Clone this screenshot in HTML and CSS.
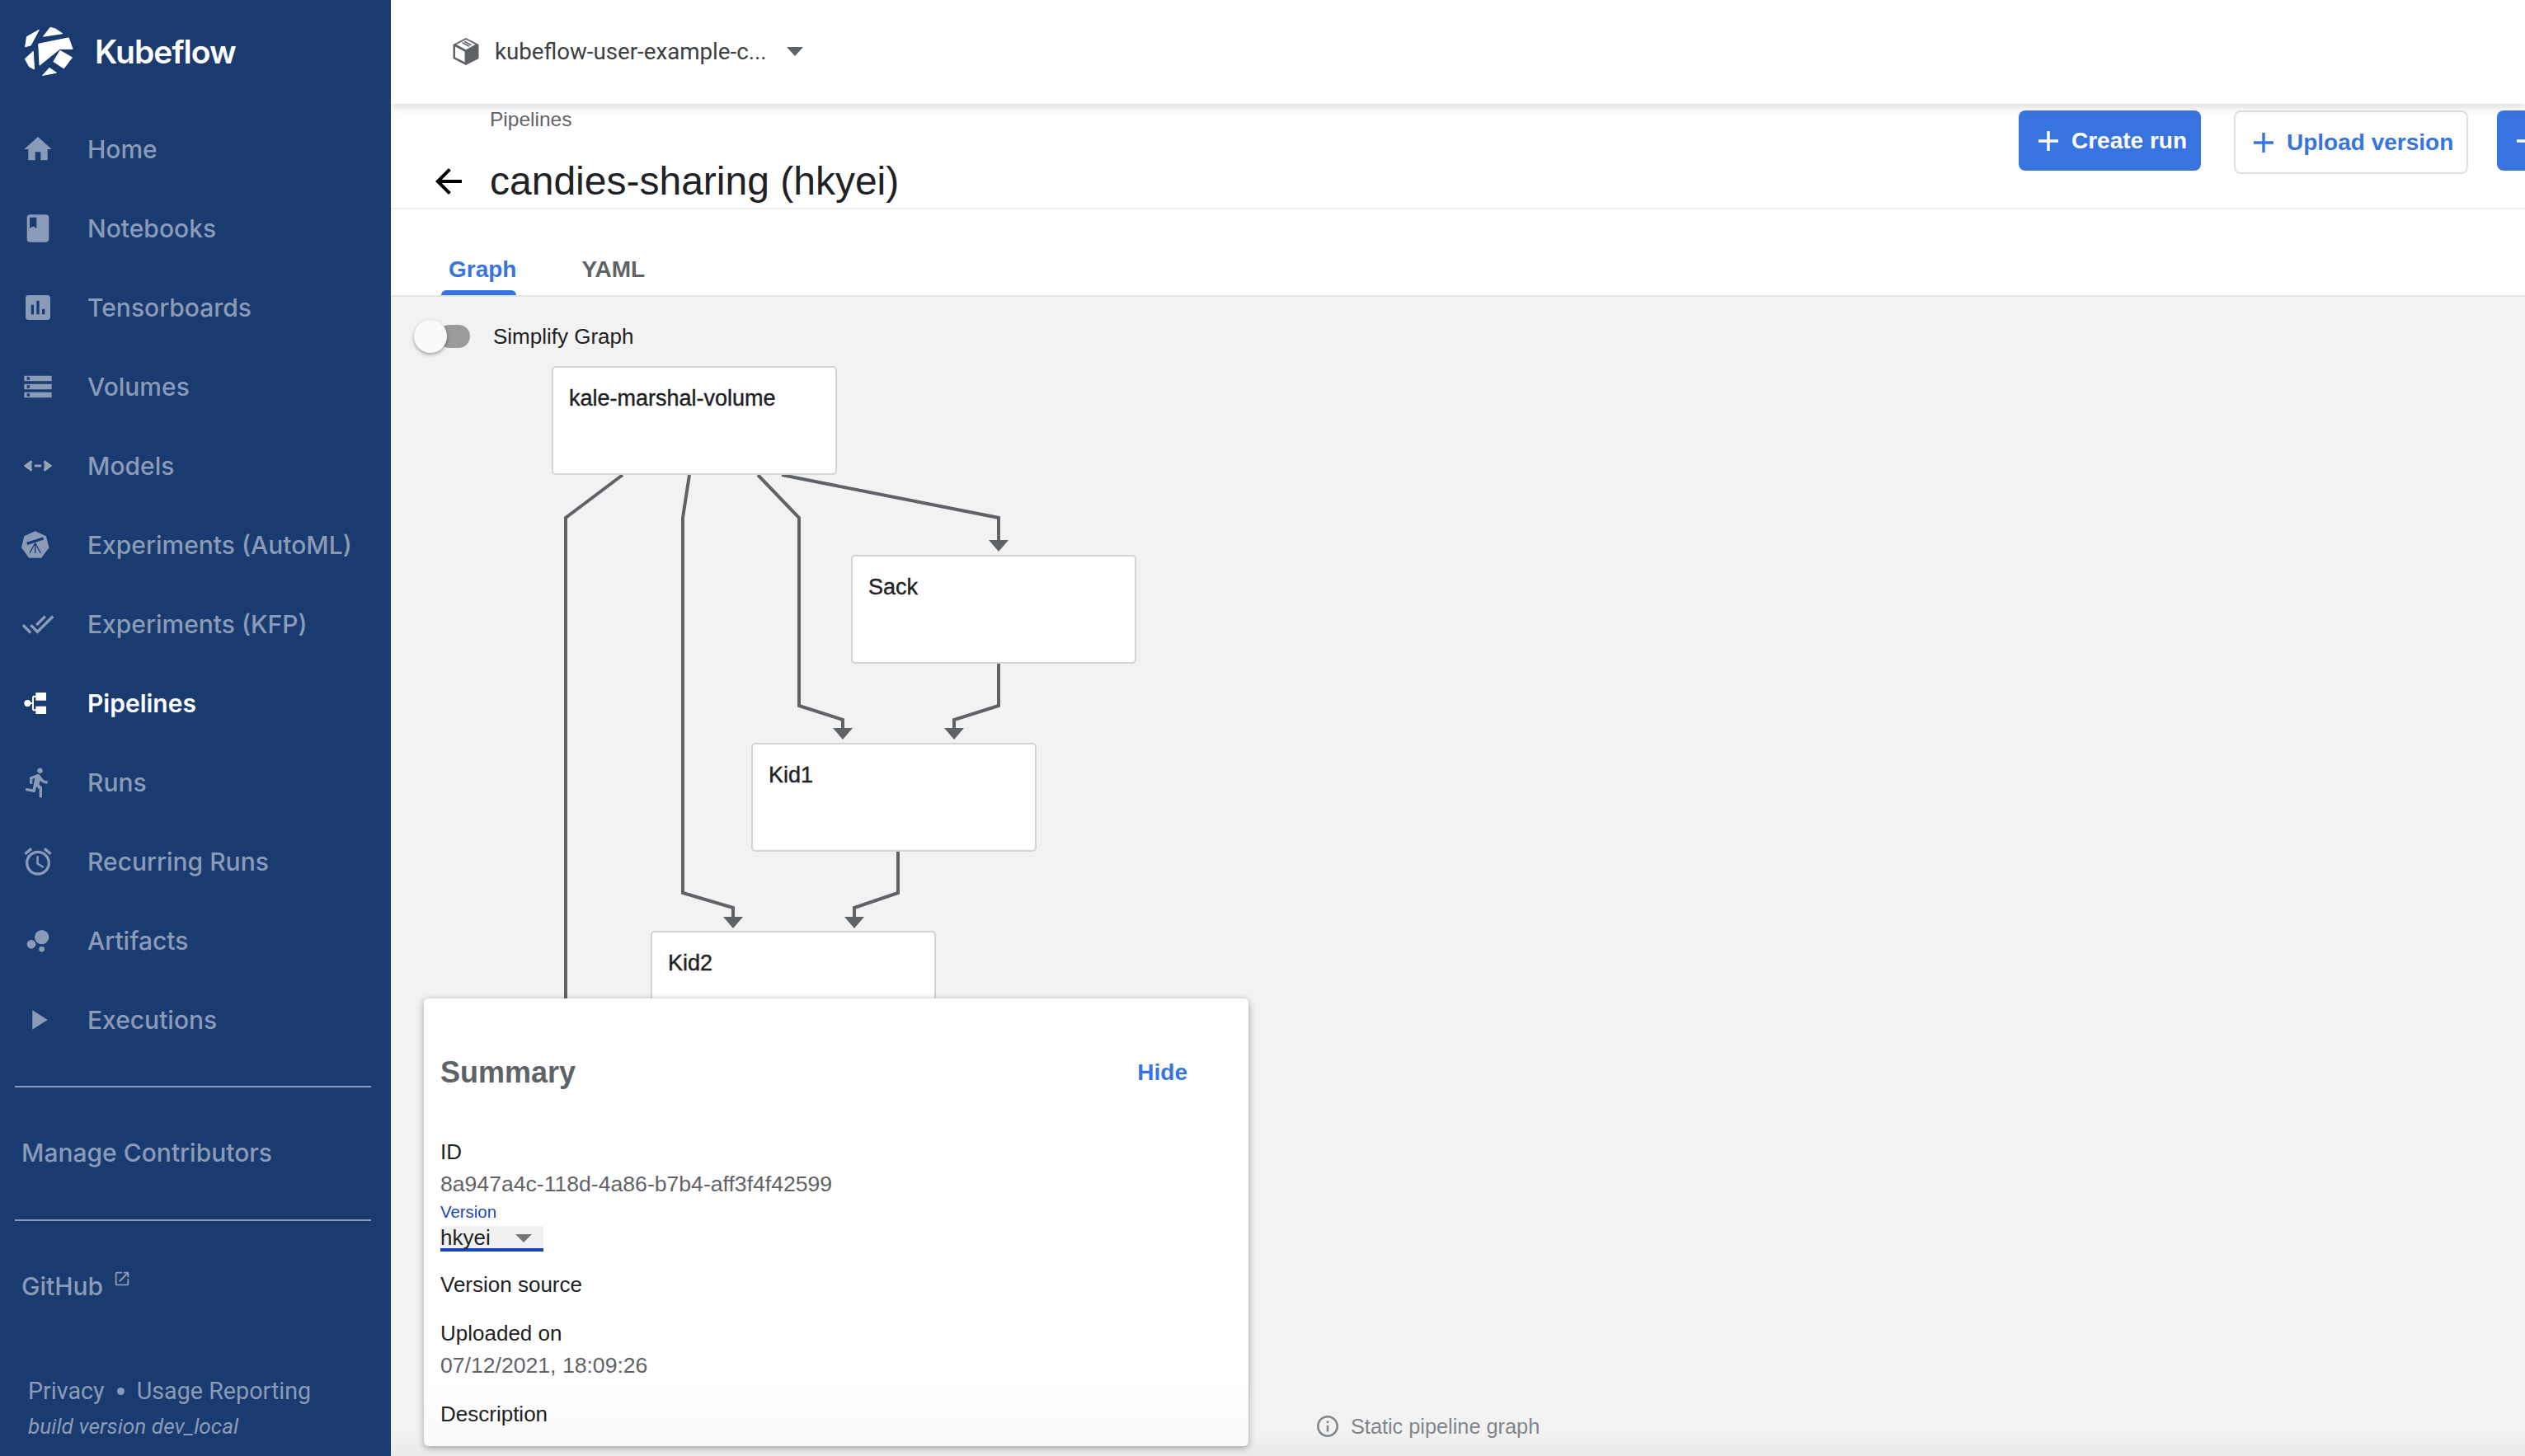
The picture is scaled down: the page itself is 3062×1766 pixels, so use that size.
FILE: index.html
```html
<!DOCTYPE html>
<html lang="en">
<head>
  <meta charset="UTF-8">
  <title>Kubeflow Pipelines</title>
  <link rel="stylesheet" href="styles.css">
</head>
<body>
  <div class="app">
    <aside class="sidebar">
      <div class="brand">
        <svg class="brand-logo" viewBox="80 90 190 195" fill="#fff" stroke="#fff" stroke-width="3" stroke-linejoin="round">
          <polygon points="155,131 181,97 200,102 227,120"/>
          <polygon points="87,170 93,132 139,106 108,164"/>
          <polygon points="86,215 117,187 121,254 102,244"/>
          <polygon points="152,277 178,249 204,267"/>
          <polygon points="137,159 250,136 265,178 217,178 141,239"/>
          <polygon points="218,184 263,210 232,251 193,225"/>
        </svg>
        <span class="brand-name">Kubeflow</span>
      </div>
      <nav class="nav">
        <a class="nav-item">
          <svg class="nav-icon" viewBox="0 0 24 24"><path d="M10 20v-6h4v6h5v-8h3L12 3 2 12h3v8z"/></svg>
          Home
        </a>
        <a class="nav-item">
          <svg class="nav-icon" viewBox="0 0 24 24"><path d="M18 2H6c-1.1 0-2 .9-2 2v16c0 1.1.9 2 2 2h12c1.1 0 2-.9 2-2V4c0-1.1-.9-2-2-2zM6 4h5v8l-2.5-1.5L6 12V4z"/></svg>
          Notebooks
        </a>
        <a class="nav-item">
          <svg class="nav-icon" viewBox="0 0 24 24"><path d="M19 3H5c-1.1 0-2 .9-2 2v14c0 1.1.9 2 2 2h14c1.1 0 2-.9 2-2V5c0-1.1-.9-2-2-2zM9 17H7v-7h2v7zm4 0h-2V7h2v10zm4 0h-2v-4h2v4z"/></svg>
          Tensorboards
        </a>
        <a class="nav-item">
          <svg class="nav-icon" viewBox="0 0 24 24"><path d="M2 20h20v-4H2v4zm2-3h2v2H4v-2zM2 4v4h20V4H2zm4 3H4V5h2v2zm-4 7h20v-4H2v4zm2-3h2v2H4v-2z"/></svg>
          Volumes
        </a>
        <a class="nav-item">
          <svg class="nav-icon" viewBox="0 0 24 24" fill="none" stroke="#9aa5b5" stroke-width="1.7"><polyline points="7.5,8.6 3,12 7.5,15.4"/><line x1="9.5" y1="12" x2="14.5" y2="12"/><polyline points="16.5,8.6 21,12 16.5,15.4"/></svg>
          Models
        </a>
        <a class="nav-item">
          <svg class="nav-icon" viewBox="2 0 24 24">
            <polygon points="12,1.9 20,5.6 22,14 16.5,21.4 7.5,21.4 2,14 4,5.6"/>
            <g class="scope">
              <line x1="6" y1="11" x2="18" y2="7.2" stroke-width="2"/>
              <path d="M12 10.5L8 18M12 10.5V18M12 10.5L16 18" stroke-width=".8" fill="none"/>
            </g>
          </svg>
          Experiments (AutoML)
        </a>
        <a class="nav-item">
          <svg class="nav-icon" viewBox="0 0 24 24"><path d="M18 7l-1.41-1.41-6.34 6.34 1.41 1.41L18 7zm4.24-1.41L11.66 16.17 7.48 12l-1.41 1.41L11.66 19l12-12-1.42-1.41zM.41 13.41L6 19l1.41-1.41L1.83 12 .41 13.41z"/></svg>
          Experiments (KFP)
        </a>
        <a class="nav-item active">
          <svg class="nav-icon" viewBox="0 0 24 24">
            <circle cx="4.4" cy="12" r="2.4"/>
            <rect x="10.4" y="4.2" width="7.6" height="5.8"/>
            <rect x="10.4" y="14.2" width="7.6" height="5.6"/>
            <path d="M4.4 12h4M8.4 7v10M8.4 7h3M8.4 17h3" stroke="#fff" stroke-width="1.2" fill="none"/>
          </svg>
          Pipelines
        </a>
        <a class="nav-item">
          <svg class="nav-icon" viewBox="0 0 24 24"><path d="M13.49 5.48c1.1 0 2-.9 2-2s-.9-2-2-2-2 .9-2 2 .9 2 2 2zm-3.6 13.9l1-4.4 2.1 2v6h2v-7.5l-2.1-2 .6-3c1.3 1.5 3.3 2.5 5.5 2.5v-2c-1.9 0-3.5-1-4.3-2.4l-1-1.6c-.4-.6-1-1-1.7-1-.3 0-.5.1-.8.1l-5.2 2.2v4.7h2v-3.4l1.8-.7-1.6 8.1-4.9-1-.4 2 7 1.4z"/></svg>
          Runs
        </a>
        <a class="nav-item">
          <svg class="nav-icon" viewBox="0 0 24 24"><path d="M22 5.72l-4.6-3.86-1.29 1.53 4.6 3.86L22 5.72zM7.88 3.39L6.6 1.86 2 5.71l1.29 1.53 4.59-3.85zM12.5 8H11v6l4.75 2.85.75-1.23-4-2.37V8zM12 4c-4.97 0-9 4.03-9 9s4.03 9 9 9 9-4.03 9-9-4.03-9-9-9zm0 16c-3.87 0-7-3.13-7-7s3.13-7 7-7 7 3.13 7 7-3.13 7-7 7z"/></svg>
          Recurring Runs
        </a>
        <a class="nav-item">
          <svg class="nav-icon" viewBox="0 0 24 24"><circle cx="14.8" cy="9.4" r="5.2"/><circle cx="7.2" cy="14.6" r="3.2"/><circle cx="14.8" cy="18.2" r="2"/></svg>
          Artifacts
        </a>
        <a class="nav-item">
          <svg class="nav-icon" viewBox="0 0 24 24"><path d="M8 5v14l11-7z"/></svg>
          Executions
        </a>
      </nav>
      <div class="side-section first">
        <a class="side-link">Manage Contributors</a>
      </div>
      <div class="side-section">
        <a class="side-link">GitHub
          <svg class="ext-icon" viewBox="0 0 24 24"><path d="M19 19H5V5h7V3H5c-1.11 0-2 .9-2 2v14c0 1.1.89 2 2 2h14c1.1 0 2-.9 2-2v-7h-2v7zM14 3v2h3.59l-9.83 9.83 1.41 1.41L19 6.41V10h2V3h-7z"/></svg>
        </a>
      </div>
      <div class="side-foot">
        <div class="foot-links"><span>Privacy</span><span class="dot"></span><span>Usage Reporting</span></div>
        <div class="foot-build">build version dev_local</div>
      </div>
    </aside>

    <main class="main">
      <header class="topbar">
        <svg class="ns-icon" viewBox="0 0 32 33">
          <path d="M16 0L31.5 8v17L16 33 .5 25V8z" fill="#5f6368"/>
          <path d="M3 10.5l11.6 6.2v12.6L3 23.4z" fill="#fff"/>
          <path d="M4.5 8L16 14.2 27.5 8 16 2z" fill="#fff"/>
          <path d="M14 4.2l8.5 4.6M11.5 5.6l8.5 4.6" stroke="#5f6368" stroke-width="1.6"/>
        </svg>
        <span class="ns-name">kubeflow-user-example-c...</span>
        <span class="caret"></span>
      </header>

      <section class="page-head">
        <div class="head-left">
          <div class="crumb">Pipelines</div>
          <div class="title-row">
            <svg class="back" viewBox="0 0 24 24"><path d="M20 11H7.83l5.59-5.59L12 4l-8 8 8 8 1.41-1.41L7.83 13H20v-2z"/></svg>
            <h1 class="title">candies-sharing (hkyei)</h1>
          </div>
        </div>
        <div class="actions">
          <button class="btn primary"><svg class="plus" viewBox="5 5 14 14"><path d="M19 13h-6v6h-2v-6H5v-2h6V5h2v6h6v2z"/></svg>Create run</button>
          <button class="btn outline"><svg class="plus" viewBox="5 5 14 14"><path d="M19 13h-6v6h-2v-6H5v-2h6V5h2v6h6v2z"/></svg>Upload version</button>
          <button class="btn primary last" aria-label="Create experiment"><svg class="plus" viewBox="5 5 14 14"><path d="M19 13h-6v6h-2v-6H5v-2h6V5h2v6h6v2z"/></svg></button>
        </div>
      </section>

      <div class="tabs">
        <span class="tab active">Graph</span>
        <span class="tab">YAML</span>
      </div>

      <section class="graph-area">
        <div class="simplify">
          <span class="toggle"></span>
          <span>Simplify Graph</span>
        </div>

        <svg class="edges" width="1200" height="900" viewBox="0 0 1200 900">
          <g fill="none" stroke="#5f6368" stroke-width="4">
            <polyline points="281,216 212,268 212,851"/>
            <polyline points="362,216 354,268 354,723 415,741 415,755"/>
            <polyline points="445,216 495,268 495,496 548,513 548,525"/>
            <polyline points="474,216 737,268 737,298"/>
            <polyline points="737,443 737,496 683,513 683,525"/>
            <polyline points="615,672 615,723 562,741 562,755"/>
          </g>
          <g fill="#5f6368">
            <polygon points="403,752 427,752 415,766"/>
            <polygon points="536,523 560,523 548,537"/>
            <polygon points="725,295 749,295 737,309"/>
            <polygon points="671,523 695,523 683,537"/>
            <polygon points="550,752 574,752 562,766"/>
          </g>
        </svg>

        <div class="node node-kale">kale-marshal-volume</div>
        <div class="node node-sack">Sack</div>
        <div class="node node-kid1">Kid1</div>
        <div class="node node-kid2">Kid2</div>

        <div class="summary">
          <div class="summary-head">
            <span class="summary-title">Summary</span>
            <a class="summary-hide">Hide</a>
          </div>
          <div class="row-label">ID</div>
          <div class="row-value">8a947a4c-118d-4a86-b7b4-aff3f4f42599</div>
          <div class="select-label">Version</div>
          <div class="select"><span>hkyei</span><span class="select-caret"></span></div>
          <div class="row-label spaced">Version source</div>
          <div class="row-label spaced">Uploaded on</div>
          <div class="row-value">07/12/2021, 18:09:26</div>
          <div class="row-label spaced">Description</div>
        </div>

        <div class="static-note">
          <svg class="info" viewBox="2 2 20 20"><path d="M11 7h2v2h-2zm0 4h2v6h-2zm1-9C6.48 2 2 6.48 2 12s4.48 10 10 10 10-4.48 10-10S17.52 2 12 2zm0 18c-4.41 0-8-3.59-8-8s3.59-8 8-8 8 3.59 8 8-3.59 8-8 8z"/></svg>
          Static pipeline graph
        </div>
      </section>
    </main>
  </div>
</body>
</html>
```

FILE: styles.css
```css
html, body {
  margin: 0;
  height: 100%;
  overflow: hidden;
}
body {
  font-family: "Liberation Sans", Arial, sans-serif;
  color: #202124;
  background: #fff;
}
.app {
  display: grid;
  grid-template-columns: 474px 1fr;
  height: 1766px;
  overflow: hidden;
}

/* sidebar */
.sidebar {
  background: #1a3b70;
  color: #8a9bb8;
  font-family: Inter, "Liberation Sans", sans-serif;
  font-weight: 500;
  display: flex;
  flex-direction: column;
  height: 1766px;
}
.brand {
  display: flex;
  align-items: center;
  height: 125px;
  padding-left: 28px;
  box-sizing: border-box;
}
.brand-logo {
  width: 62px;
  height: 63px;
}
.brand-name {
  margin-left: 25px;
  color: #fff;
  font-size: 39px;
  font-weight: 600;
  letter-spacing: -1px;
}
.nav {
  display: flex;
  flex-direction: column;
  padding-top: 8px;
}
.nav-item {
  display: flex;
  align-items: center;
  height: 96px;
  padding-left: 26px;
  font-size: 30px;
}
.nav-item.active {
  color: #fff;
  font-weight: 600;
}
.nav-icon {
  width: 40px;
  height: 40px;
  margin-right: 40px;
  fill: currentColor;
  flex: none;
}
.scope {
  stroke: #1a3b70;
}
.side-section {
  margin: 0 24px 0 18px;
  border-top: 2px solid #8a9bb8;
  height: 160px;
  display: flex;
  align-items: center;
}
.side-section.first {
  margin-top: 32px;
}
.side-link {
  padding: 0 0 2px 8px;
  font-size: 30px;
  display: flex;
  align-items: center;
}
.ext-icon {
  width: 22px;
  height: 22px;
  margin: -18px 0 0 12px;
  fill: currentColor;
}
.side-foot {
  margin-top: auto;
  padding: 0 0 14px 34px;
  font-family: Roboto, "Liberation Sans", sans-serif;
  font-weight: 400;
}
.foot-links {
  display: flex;
  align-items: center;
  font-size: 28.7px;
  line-height: 43px;
}
.dot {
  width: 9px;
  height: 9px;
  margin: 0 15px;
  border-radius: 50%;
  background: #8a9bb8;
}
.foot-build {
  font-size: 26.2px;
  line-height: 43px;
  font-style: italic;
}

/* main column */
.main {
  display: flex;
  flex-direction: column;
  min-width: 0;
  overflow: hidden;
}
.topbar {
  flex: none;
  height: 126px;
  padding: 0 0 2px 75px;
  display: flex;
  align-items: center;
  box-sizing: border-box;
  background: #fff;
  box-shadow: 0 3px 10px rgba(0,0,0,.16);
  position: relative;
  z-index: 2;
}
.ns-icon {
  width: 32px;
  height: 33px;
}
.ns-name {
  margin-left: 19px;
  font-size: 27.7px;
  color: #3c4043;
  font-family: Roboto, "Liberation Sans", sans-serif;
}
.caret {
  margin-left: 24px;
  width: 0;
  height: 0;
  border-left: 10px solid transparent;
  border-right: 10px solid transparent;
  border-top: 11px solid #5f6368;
}

.page-head {
  flex: none;
  height: 128px;
  display: flex;
  justify-content: space-between;
  box-sizing: border-box;
  border-bottom: 2px solid #eee;
  overflow: hidden;
}
.crumb {
  margin: 5px 0 0 120px;
  font-size: 24.5px;
  line-height: 28px;
  color: #5f6368;
}
.title-row {
  display: flex;
  align-items: center;
  margin-top: 33px;
  padding-left: 46px;
}
.back {
  width: 48px;
  height: 48px;
  margin-right: 26px;
}
.title {
  margin: 0;
  font-size: 48px;
  font-weight: 400;
  line-height: 56px;
}
.actions {
  display: flex;
  align-items: flex-start;
  padding-top: 8px;
  flex: none;
  width: 614px;
  overflow: hidden;
}
.btn {
  flex: none;
  display: flex;
  align-items: center;
  height: 73px;
  padding: 0 10px 0 24px;
  border: none;
  border-radius: 8px;
  font-family: inherit;
  font-size: 28px;
  font-weight: 700;
  white-space: nowrap;
}
.btn.primary {
  width: 221px;
  background: #3874e0;
  color: #fff;
}
.btn.outline {
  width: 284px;
  height: 77px;
  margin: 0 35px 0 40px;
  padding-left: 22px;
  background: #fff;
  color: #3874e0;
  border: 2px solid #e0e0e0;
}
.btn.last {
  width: 60px;
}
.plus {
  width: 24px;
  height: 24px;
  margin-right: 16px;
  fill: currentColor;
  flex: none;
}

.tabs {
  flex: none;
  height: 106px;
  display: flex;
  box-sizing: border-box;
  border-bottom: 2px solid #e4e4e4;
  padding-left: 61px;
}
.tab {
  position: relative;
  margin: 0 70px 0 9px;
  padding-top: 57px;
  font-size: 28px;
  font-weight: 700;
  line-height: 32px;
  color: #5f6368;
}
.tab.active {
  color: #3874e0;
}
.tab.active::after {
  content: "";
  position: absolute;
  left: -9px;
  right: 0;
  bottom: 0;
  height: 6px;
  border-radius: 6px 6px 0 0;
  background: #3874e0;
}

/* graph */
.graph-area {
  flex: 1;
  position: relative;
  background: linear-gradient(#f2f2f2 calc(100% - 30px), #ebebeb);
  overflow: hidden;
}
.simplify {
  display: flex;
  align-items: center;
  gap: 28px;
  padding: 28px 0 0 28px;
  font-size: 26px;
  line-height: 40px;
}
.toggle {
  position: relative;
  width: 68px;
  height: 40px;
  flex: none;
}
.toggle::before {
  content: "";
  position: absolute;
  left: 29px;
  top: 6px;
  width: 39px;
  height: 28px;
  border-radius: 14px;
  background: #9b9b9b;
}
.toggle::after {
  content: "";
  position: absolute;
  left: 0;
  top: 0;
  width: 40px;
  height: 40px;
  border-radius: 50%;
  background: #fafafa;
  box-shadow: 0 2px 4px rgba(0,0,0,.35);
}
.edges {
  position: absolute;
  left: 0;
  top: 0;
}
.node {
  position: absolute;
  width: 346px;
  height: 132px;
  box-sizing: border-box;
  padding: 20px 19px;
  background: #fff;
  border: 2px solid #d4d4d4;
  border-radius: 5px;
  font-size: 27px;
  line-height: 34px;
  -webkit-text-stroke: .4px #202124;
}
.node-kale { left: 195px; top: 84px; }
.node-sack { left: 558px; top: 313px; }
.node-kid1 { left: 437px; top: 541px; }
.node-kid2 { left: 315px; top: 769px; }

.summary {
  position: absolute;
  left: 40px;
  top: 851px;
  width: 1000px;
  height: 543px;
  box-sizing: border-box;
  padding-left: 20px;
  border-radius: 6px;
  background: linear-gradient(#fff 85%, #fafafa);
  box-shadow: 0 2px 8px rgba(0,0,0,.35);
}
.summary-head {
  display: flex;
  justify-content: space-between;
  align-items: center;
  height: 44px;
  padding: 68px 74px 55px 0;
}
.summary-title {
  font-size: 36px;
  font-weight: 700;
  color: #5f6368;
}
.summary-hide {
  font-size: 28px;
  font-weight: 700;
  color: #3874e0;
}
.row-label {
  font-size: 26px;
  line-height: 38px;
}
.row-label.spaced {
  margin-top: 21px;
}
.row-value {
  margin-top: 1px;
  font-size: 26.6px;
  line-height: 38px;
  color: #5f6368;
}
.select-label {
  margin-top: 3px;
  font-size: 20.4px;
  line-height: 24px;
  color: #1c48b4;
}
.select {
  margin-top: 5px;
  width: 125px;
  height: 31px;
  box-sizing: border-box;
  display: flex;
  align-items: center;
  justify-content: space-between;
  padding: 2px 14px 0 0;
  background: #f1f1f1;
  border-bottom: 4px solid #1545b5;
  font-size: 26px;
}
.select-caret {
  width: 0;
  height: 0;
  border-left: 10px solid transparent;
  border-right: 10px solid transparent;
  border-top: 10px solid #757575;
}
.static-note {
  position: absolute;
  left: 1123px;
  top: 1357px;
  display: flex;
  align-items: center;
  gap: 15px;
  font-size: 25.3px;
  line-height: 26px;
  color: #80868b;
}
.info {
  width: 26px;
  height: 26px;
  fill: currentColor;
}
```
